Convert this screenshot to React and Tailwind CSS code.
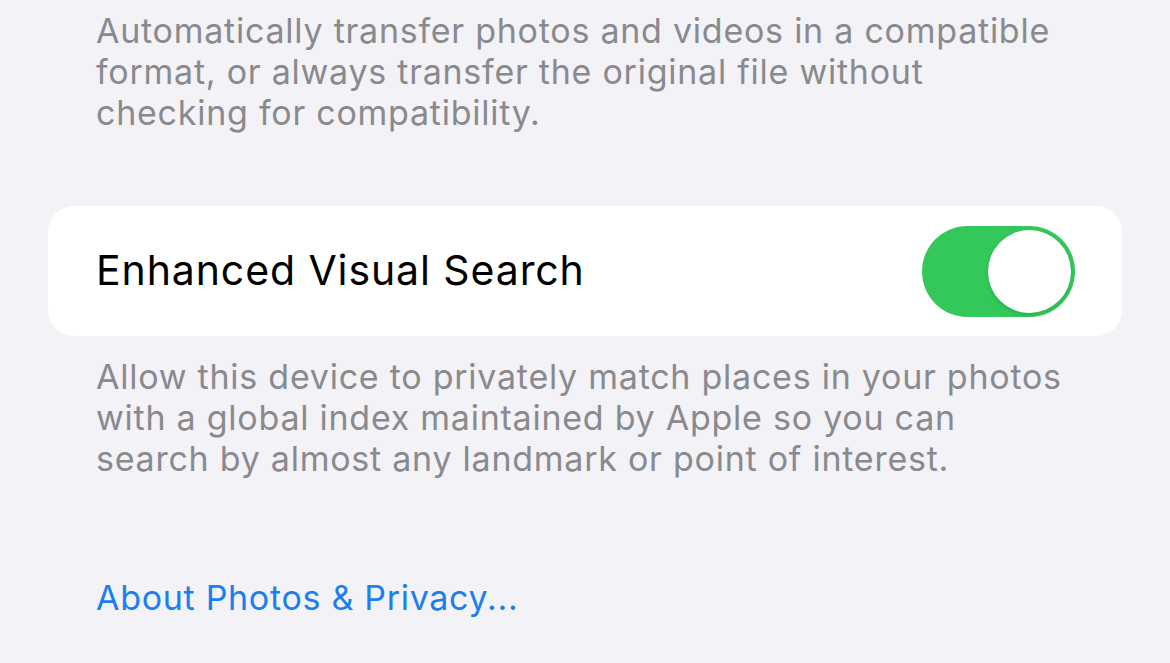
export default function App() {
  return (
    <div
      className="min-h-[663px] w-[1170px] bg-[#f2f2f7] px-12 pt-[10px]"
      style={{ fontFamily: 'Inter, "Noto Sans", sans-serif' }}
    >
      <p className="px-12 text-[34px] leading-[41px] tracking-[0.75px] text-[#8a8a8e]">
        Automatically transfer photos and videos in a compatible
        <br />
        format, or always transfer the original file without
        <br />
        checking for compatibility.
      </p>

      <div className="mt-[73px] flex h-[130px] items-center justify-between rounded-[26px] bg-white pl-12 pr-[47px]">
        <span className="text-[41px] tracking-[0.9px] text-black">Enhanced Visual Search</span>
        <button
          type="button"
          aria-label="Enhanced Visual Search"
          className="flex h-[91px] w-[153px] items-center justify-end rounded-full bg-[#34c759] pr-[4px]"
        >
          <span className="h-[83px] w-[83px] rounded-full bg-white shadow-[0_2px_4px_rgba(0,0,0,0.12)]" />
        </button>
      </div>

      <p className="mt-[20px] px-12 text-[34px] leading-[41px] tracking-[0.75px] text-[#8a8a8e]">
        Allow this device to privately match places in your photos
        <br />
        with a global index maintained by Apple so you can
        <br />
        search by almost any landmark or point of interest.
      </p>

      <a href="#" className="mt-[98px] block px-12 text-[34px] leading-[41px] tracking-[0.7px] text-[#1a7ff0]">
        About Photos &amp; Privacy...
      </a>
    </div>
  );
}
